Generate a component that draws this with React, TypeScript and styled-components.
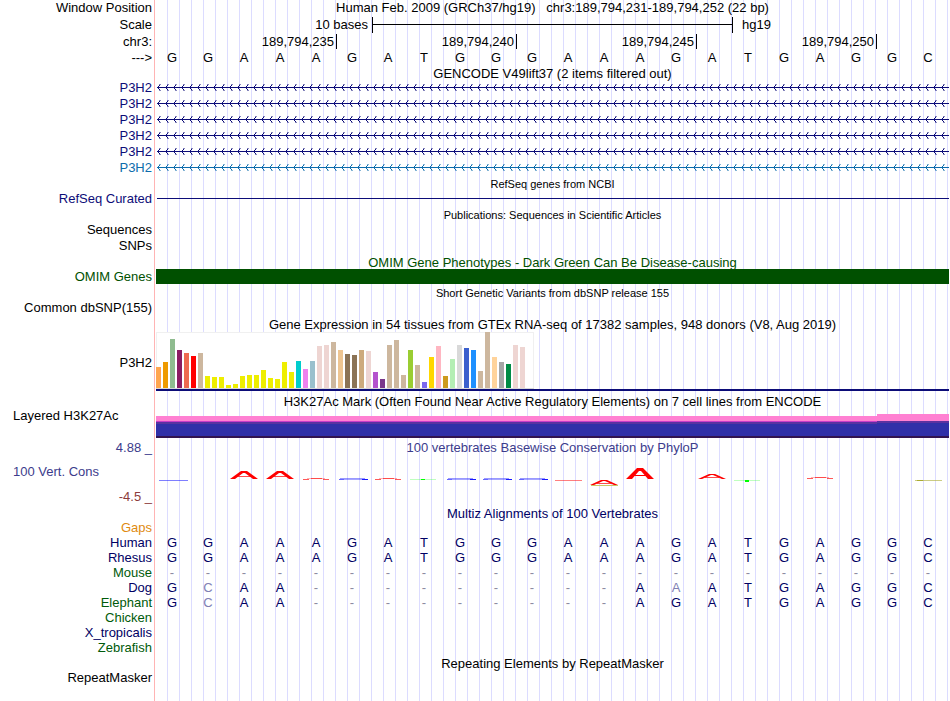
import React from "react";
import styled, { createGlobalStyle } from "styled-components";

const GlobalStyle = createGlobalStyle`
  body {
    margin: 0;
    background: #fff;
    color: #000;
    font: 13px/16px "Liberation Sans", Arial, sans-serif;
  }
`;

const NAVY = "#0c0c78";
const DARK_GREEN = "#005000";
const CONS_BLUE = "#3c3c8c";
const CONS_RED = "#8c3c3c";
const ALIGN_BLUE = "#000064";
const ALIGN_GREEN = "#005a0a";

/* The guide lines stand a third of a base apart, behind every track. */
const Browser = styled.main`
  min-height: 100vh;
  box-sizing: border-box;
  padding-right: 1px;
  background:
    linear-gradient(#ffb4b4, #ffb4b4) 154px 0 / 1px 100% no-repeat,
    linear-gradient(#fff, #fff) 0 0 / 156px 100% no-repeat,
    linear-gradient(90deg, #dcdcff 1px, transparent 1px) 167px 0 /
      calc((100% - 158px) / 66) 100% repeat-x;
`;

const Row = styled.div<{ $h: number }>`
  display: grid;
  grid-template-columns: 156px minmax(0, 1fr);
  height: ${(p) => p.$h}px;
`;

const Label = styled.div<{ $color?: string; $left?: boolean }>`
  padding: ${(p) => (p.$left ? "0 0 0 13px" : "0 4px 0 0")};
  text-align: ${(p) => (p.$left ? "left" : "right")};
  color: ${(p) => p.$color ?? "#000"};
  line-height: 16px;
  white-space: nowrap;
`;

const CenteredLabel = styled(Label)`
  align-self: center;
`;

const TrackTitle = styled.h2<{ $color?: string; $small?: boolean; $low?: boolean }>`
  margin: 0;
  padding-top: ${(p) => (p.$low ? 1 : 0)}px;
  font-size: ${(p) => (p.$small ? 11 : 13)}px;
  font-weight: 400;
  line-height: 16px;
  text-align: center;
  white-space: pre;
  color: ${(p) => p.$color ?? "#000"};
`;

const BaseGrid = styled.div`
  display: grid;
  grid-template-columns: repeat(22, 1fr);
  padding-right: 1px;
`;

const Base = styled.span<{ $color?: string }>`
  padding-right: 4px;
  text-align: center;
  line-height: 16px;
  color: ${(p) => p.$color ?? "#000"};
`;

const ScaleCaption = styled.span<{ $after?: boolean }>`
  grid-column: ${(p) => (p.$after ? "17 / 23" : "1 / 7")};
  text-align: ${(p) => (p.$after ? "left" : "right")};
  padding: ${(p) => (p.$after ? "0 0 0 10px" : "0 4px 0 0")};
`;

const ScaleBar = styled.span`
  grid-column: 7 / 17;
  height: 16px;
  margin-right: -1px;
  border: solid #000;
  border-width: 0 1px;
  background: linear-gradient(#000, #000) 0 7px / 100% 1px no-repeat;
`;

const Tick = styled.span`
  grid-column: span 5;
  height: 15px;
  margin-right: -1px;
  padding-right: 2px;
  border-right: 1px solid #000;
  text-align: right;
`;

const Strand = styled.svg`
  display: block;
  width: 100%;
  height: 16px;
`;

const RefSeqLine = styled.div`
  height: 1px;
  margin: 7px 0 0 1px;
  background: ${NAVY};
`;

const OmimBar = styled.div`
  height: 15px;
  background: ${DARK_GREEN};
`;

const Expression = styled.div`
  height: 57px;
  border-bottom: 2px solid ${NAVY};
`;

const ExpressionPlot = styled.svg`
  display: block;
  background: #fff;
`;

const Signal = styled.div`
  display: grid;
  grid-template-columns: 10fr 1fr;
  align-items: end;
  height: 30px;
`;

const SignalLow = styled.div`
  height: 22px;
  background: linear-gradient(
    #ff80d2 5px, #c83cc8 5px 6px, #5a32a0 6px 8px, #3030a8 8px 20px, #321450 20px
  );
`;

const SignalHigh = styled.div`
  height: 24px;
  background: linear-gradient(
    #ff80d2 7px, #5a32a0 7px 9px, #3030a8 9px 22px, #321450 22px
  );
`;

const ConsLabels = styled.div`
  display: flex;
  flex-direction: column;
  justify-content: space-between;
  padding: 8px 0 1px;
`;

const LogoCell = styled.svg`
  display: block;
  width: 36px;
  height: 50px;
  overflow: visible;
`;

const GENOME = "GGAAAGATGGGAAAGATGAGGC";

const TISSUES: [number, string][] = [
  [21, "#ffa54f"], [26, "#ee9a00"], [49, "#8fbc8f"], [38, "#8b1c62"],
  [35, "#ee6a50"], [32, "#ff0000"], [35, "#cdb79e"], [12, "#eeee00"],
  [11, "#eeee00"], [11, "#eeee00"], [3, "#eeee00"], [4, "#eeee00"],
  [12, "#eeee00"], [13, "#eeee00"], [13, "#eeee00"], [18, "#eeee00"],
  [10, "#eeee00"], [9, "#eeee00"], [26, "#eeee00"], [16, "#eeee00"],
  [27, "#00cdcd"], [19, "#ee82ee"], [27, "#9ac0cd"], [42, "#eed5d2"],
  [43, "#eed5d2"], [46, "#cdb79e"], [38, "#eec591"], [34, "#8b7355"],
  [33, "#8b7355"], [38, "#cdaa7d"], [37, "#eed5d2"], [16, "#b452cd"],
  [9, "#7a378b"], [43, "#cdb79e"], [48, "#cdb79e"], [13, "#cdb79e"],
  [38, "#9acd32"], [23, "#cdb79e"], [6, "#7b68ee"], [31, "#ffd700"],
  [42, "#ffb6c1"], [12, "#cd9b1d"], [29, "#b4eeb4"], [43, "#d9d9d9"],
  [40, "#3a5fcd"], [38, "#1e90ff"], [17, "#cdb79e"], [56, "#cdb79e"],
  [31, "#ffd39b"], [26, "#a6a6a6"], [24, "#008b45"], [43, "#eed5d2"],
  [41, "#eed5d2"],
];

type Mark =
  | { kind: "peak"; top: number; bottom: number; weight: number; base?: boolean }
  | { kind: "flat"; y: number; faint?: boolean }
  | { kind: "blue"; faint?: boolean }
  | { kind: "green"; y: number; tall?: boolean }
  | { kind: "olive" };

const MARKS: Record<number, Mark> = {
  0: { kind: "blue", faint: true },
  2: { kind: "peak", top: 15, bottom: 23, weight: 2 },
  3: { kind: "peak", top: 15, bottom: 23, weight: 2 },
  4: { kind: "flat", y: 22 },
  5: { kind: "blue" },
  6: { kind: "flat", y: 22 },
  7: { kind: "green", y: 23 },
  8: { kind: "blue" },
  9: { kind: "blue" },
  10: { kind: "blue" },
  11: { kind: "flat", y: 24, faint: true },
  12: { kind: "peak", top: 24, bottom: 29, weight: 1, base: true },
  13: { kind: "peak", top: 12, bottom: 23, weight: 3 },
  15: { kind: "peak", top: 18, bottom: 23, weight: 1 },
  16: { kind: "green", y: 24, tall: true },
  18: { kind: "flat", y: 21 },
  21: { kind: "olive" },
};

const ALIGNMENTS: { name: string; color: string; seq: string }[] = [
  { name: "Human", color: ALIGN_BLUE, seq: GENOME },
  { name: "Rhesus", color: ALIGN_BLUE, seq: GENOME },
  { name: "Mouse", color: ALIGN_GREEN, seq: "-".repeat(22) },
  { name: "Dog", color: ALIGN_BLUE, seq: "GCAA---------AAATGAGGC" },
  { name: "Elephant", color: ALIGN_GREEN, seq: "GCAA---------AGATGAGGC" },
  { name: "Chicken", color: ALIGN_GREEN, seq: "" },
  { name: "X_tropicalis", color: ALIGN_BLUE, seq: "" },
  { name: "Zebrafish", color: ALIGN_GREEN, seq: "" },
];

function TitleRow(props: {
  h: number;
  color?: string;
  small?: boolean;
  low?: boolean;
  label?: React.ReactNode;
  children: string;
}) {
  return (
    <Row $h={props.h}>
      {props.label ?? <span />}
      <TrackTitle $color={props.color} $small={props.small} $low={props.low}>
        {props.children}
      </TrackTitle>
    </Row>
  );
}

function Transcript({ id, color }: { id: string; color: string }) {
  return (
    <Row $h={16}>
      <Label $color={color}>P3H2</Label>
      <Strand shapeRendering="crispEdges" aria-hidden="true">
        <defs>
          <pattern id={id} width="8" height="16" patternUnits="userSpaceOnUse">
            <path
              d="M1 7h1v1h-1zM2 6h1v1h-1zM2 8h1v1h-1zM3 5h1v1h-1zM3 9h1v1h-1z"
              fill={color}
            />
            <path d="M4 4h1v1h-1zM4 10h1v1h-1zM3 4h1v1h-1zM3 10h1v1h-1z" fill={color} opacity="0.5" />
          </pattern>
        </defs>
        <rect width="100%" height="16" fill={`url(#${id})`} />
        <rect x="1" y="7" width="100%" height="1" fill={color} />
      </Strand>
    </Row>
  );
}

function Bases({ seq, aligned }: { seq: string; aligned?: boolean }) {
  return (
    <BaseGrid>
      {seq.split("").map((base, i) => {
        const color = !aligned
          ? "#000"
          : base === GENOME[i]
            ? ALIGN_BLUE
            : base === "-"
              ? "#8c8ca0"
              : "#8080b4";
        return (
          <Base key={i} $color={color}>
            {base}
          </Base>
        );
      })}
    </BaseGrid>
  );
}

function LogoMark({ mark }: { mark: Mark }) {
  switch (mark.kind) {
    case "peak": {
      const { top, bottom, weight } = mark;
      const bar = Math.round(top + (bottom - top) * 0.65);
      return (
        <g>
          {mark.base && <rect x="3" y={bottom} width="27" height="1" fill="#c8c864" />}
          <path
            d={`M2 ${bottom}L13 ${top}H19L30 ${bottom}H${27 - weight}L17 ${top + weight}H15L${5 + weight} ${bottom}Z`}
            fill="#f00"
          />
          <rect x="9" y={bar} width="14" height="1" fill="#f00" opacity={weight > 2 ? 1 : 0.7} />
        </g>
      );
    }
    case "flat":
      return mark.faint ? (
        <rect x="3" y={mark.y} width="27" height="1" fill="#f00" opacity="0.5" />
      ) : (
        <g fill="#f00">
          <rect x="11" y={mark.y} width="11" height="1" opacity="0.7" />
          <rect x="7" y={mark.y} width="4" height="1" opacity="0.3" />
          <rect x="22" y={mark.y} width="3" height="1" opacity="0.3" />
          <rect x="3" y={mark.y + 1} width="6" height="1" opacity="0.65" />
          <rect x="23" y={mark.y + 1} width="6" height="1" opacity="0.65" />
        </g>
      );
    case "blue":
      return mark.faint ? (
        <rect x="3" y="24" width="29" height="1" fill="#00f" opacity="0.5" />
      ) : (
        <g fill="#00f">
          <rect x="4" y="22" width="25" height="1" opacity="0.4" />
          <rect x="3" y="23" width="5" height="1" opacity="0.6" />
          <rect x="8" y="23" width="18" height="1" opacity="0.35" />
          <rect x="26" y="23" width="6" height="1" opacity="0.9" />
        </g>
      );
    case "green":
      return (
        <g fill="#0f0">
          <rect x="2" y={mark.y} width="26" height="1" opacity="0.25" />
          <rect x="13" y={mark.y} width="4" height={mark.tall ? 2 : 1} />
        </g>
      );
    case "olive":
      return (
        <g fill="#aaaa32">
          <rect x="3" y="24" width="27" height="1" opacity="0.6" />
          <rect x="5" y="24" width="6" height="1" />
        </g>
      );
  }
}

export default function App() {
  return (
    <>
      <GlobalStyle />
      <Browser>
        <TitleRow h={17} label={<Label>Window Position</Label>}>
          {"Human Feb. 2009 (GRCh37/hg19)   chr3:189,794,231-189,794,252 (22 bp)"}
        </TitleRow>
        <Row $h={17}>
          <Label>Scale</Label>
          <BaseGrid>
            <ScaleCaption>10 bases</ScaleCaption>
            <ScaleBar />
            <ScaleCaption $after>hg19</ScaleCaption>
          </BaseGrid>
        </Row>
        <Row $h={16}>
          <Label>chr3:</Label>
          <BaseGrid>
            {[235, 240, 245, 250].map((n) => (
              <Tick key={n}>{`189,794,${n}`}</Tick>
            ))}
          </BaseGrid>
        </Row>
        <Row $h={16}>
          <Label>---&gt;</Label>
          <Bases seq={GENOME} />
        </Row>

        <TitleRow h={14}>GENCODE V49lift37 (2 items filtered out)</TitleRow>
        {[1, 2, 3, 4, 5].map((n) => (
          <Transcript key={n} id={`strand-${n}`} color={NAVY} />
        ))}
        <Transcript id="strand-6" color="#0c6cac" />

        <TitleRow h={15} small>RefSeq genes from NCBI</TitleRow>
        <Row $h={16}>
          <Label $color={NAVY}>RefSeq Curated</Label>
          <RefSeqLine />
        </Row>

        <TitleRow h={15} small>Publications: Sequences in Scientific Articles</TitleRow>
        <Row $h={16}>
          <Label>Sequences</Label>
        </Row>
        <Row $h={16}>
          <Label>SNPs</Label>
        </Row>

        <TitleRow h={15} low color={DARK_GREEN}>
          OMIM Gene Phenotypes - Dark Green Can Be Disease-causing
        </TitleRow>
        <Row $h={16}>
          <Label $color={DARK_GREEN}>OMIM Genes</Label>
          <OmimBar />
        </Row>

        <TitleRow h={15} small>Short Genetic Variants from dbSNP release 155</TitleRow>
        <Row $h={16}>
          <Label>Common dbSNP(155)</Label>
        </Row>

        <TitleRow h={16} low>
          Gene Expression in 54 tissues from GTEx RNA-seq of 17382 samples, 948 donors (V8, Aug 2019)
        </TitleRow>
        <Row $h={61}>
          <CenteredLabel>P3H2</CenteredLabel>
          <Expression>
            <ExpressionPlot
              width="378"
              height="57"
              shapeRendering="crispEdges"
              role="img"
              aria-label="P3H2 expression by tissue"
            >
              <rect x="0" y="0" width="378" height="1" fill="#f0f0f0" />
              <rect x="0" y="0" width="1" height="57" fill="#f0f0f0" />
              <rect x="377" y="0" width="1" height="57" fill="#f0f0f0" />
              <rect x="0" y="56" width="378" height="1" fill="#d8d8d8" />
              {TISSUES.map(([h, color], i) => (
                <rect key={i} x={i * 7} y={56 - h} width="5" height={h} fill={color} />
              ))}
            </ExpressionPlot>
          </Expression>
        </Row>

        <TitleRow h={15} low>
          H3K27Ac Mark (Often Found Near Active Regulatory Elements) on 7 cell lines from ENCODE
        </TitleRow>
        <Row $h={32}>
          <Label $left>Layered H3K27Ac</Label>
          <Signal>
            <SignalLow />
            <SignalHigh />
          </Signal>
        </Row>

        <TitleRow h={16} color={CONS_BLUE} label={<Label $color={CONS_BLUE}>4.88 _</Label>}>
          100 vertebrates Basewise Conservation by PhyloP
        </TitleRow>
        <Row $h={50}>
          <ConsLabels>
            <Label $left $color={CONS_BLUE}>100 Vert. Cons</Label>
            <Label $color={CONS_RED}>-4.5 _</Label>
          </ConsLabels>
          <BaseGrid>
            {GENOME.split("").map((_, i) => (
              <LogoCell key={i} viewBox="0 0 36 50" aria-hidden="true">
                {MARKS[i] && <LogoMark mark={MARKS[i]} />}
              </LogoCell>
            ))}
          </BaseGrid>
        </Row>

        <TitleRow h={14} color={ALIGN_BLUE}>Multiz Alignments of 100 Vertebrates</TitleRow>
        <Row $h={15}>
          <Label $color="#e08a10">Gaps</Label>
        </Row>
        {ALIGNMENTS.map((a) => (
          <Row $h={15} key={a.name}>
            <Label $color={a.color}>{a.name}</Label>
            <Bases seq={a.seq} aligned />
          </Row>
        ))}

        <TitleRow h={15} low>Repeating Elements by RepeatMasker</TitleRow>
        <Row $h={16}>
          <Label>RepeatMasker</Label>
        </Row>
      </Browser>
    </>
  );
}
